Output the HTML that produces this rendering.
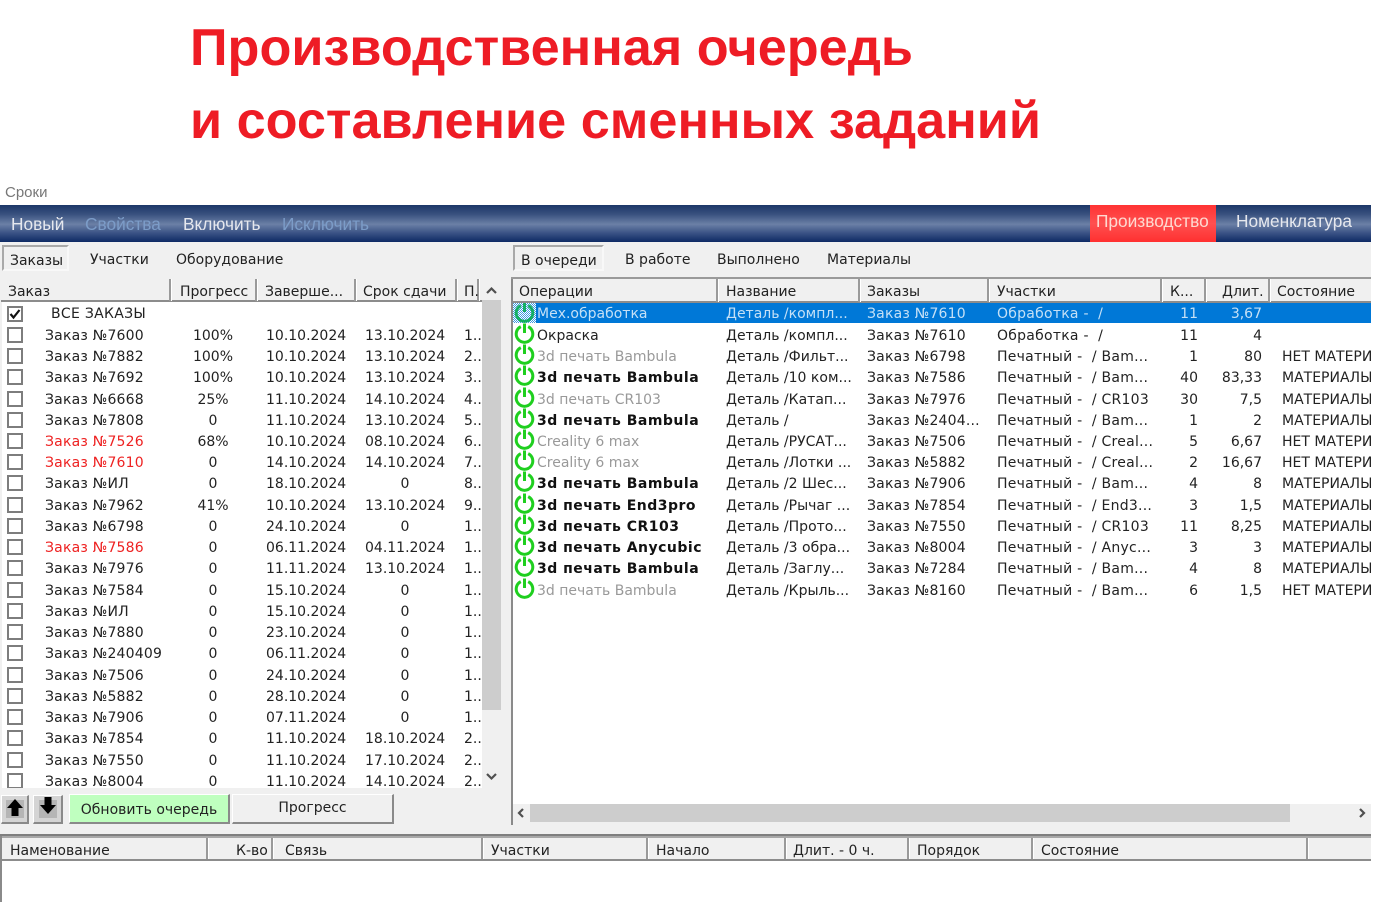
<!DOCTYPE html>
<html lang="ru"><head><meta charset="utf-8"><title>Производственная очередь</title>
<style>
html,body{margin:0;padding:0;background:#fff}
#p{position:relative;width:1373px;height:902px;overflow:hidden;background:#fff;font:14px/21px "DejaVu Sans","Liberation Sans",sans-serif;color:#222}
#p div,#p span,#p svg{position:absolute}
.bg{background:#f0f0f0}
.t{white-space:nowrap}
.nav{font:17.3px/20px "Liberation Sans",sans-serif;white-space:nowrap;top:214px;color:#e6e8ee}
.dis{color:#7c9cc8}
.tab{white-space:nowrap;top:250px;color:#222}
.act{border:2px solid #a9a9a9;border-right-color:#f8f8f8;border-bottom-color:#f8f8f8;background:#f0f0f0;height:26px;box-sizing:border-box}
.hd{background:#f0f0f0;border-bottom:2px solid #8c8c8c;box-sizing:border-box}
.sp{width:2px;background:#9a9a9a;border-right:1px solid #fff}
.h{white-space:nowrap;color:#222;line-height:20px}
.r{height:21px;left:0;width:1373px}
.r span{white-space:nowrap;top:2px}
.r.f span{top:1px}
.cb{left:7px;top:3px;width:12px;height:12px;border:2px solid #7d7d7d;background:#fff}
.a{left:45px;letter-spacing:.2px}.b{left:183px;width:60px;text-align:center}.c{left:266px}.d{left:365px}.d0{left:375px;width:60px;text-align:center}.e{left:464px}
.red{color:#ee2222}
.ic{left:513px;top:-2px;width:23px;height:23px}
.o{left:537px}.n{left:726px}.z{left:867px;letter-spacing:.2px}.u{left:997px;letter-spacing:.25px}.k{left:1138px;width:60px;text-align:right}.l{left:1202px;width:60px;text-align:right}.s{left:1282px}
.gr{color:#999}
.bd{font-weight:bold;color:#111;font-size:14px;letter-spacing:.5px}
.btn{box-sizing:border-box;border:1px solid #fff;border-right:2px solid #8a8a8a;border-bottom:2px solid #8a8a8a;text-align:center;line-height:26px}
</style></head><body><div id="p">
<svg style="left:0;top:0" width="1373" height="160"><text x="190" y="65" font-family="Liberation Sans" font-weight="bold" font-size="52" fill="#ee1c25" textLength="723" lengthAdjust="spacingAndGlyphs">Производственная очередь</text><text x="190" y="138" font-family="Liberation Sans" font-weight="bold" font-size="52" fill="#ee1c25" textLength="851" lengthAdjust="spacingAndGlyphs">и составление сменных заданий</text></svg>
<span class="t" style="left:5px;top:183px;color:#777;font:15px/20px 'Liberation Sans',sans-serif">Сроки</span>

<div class="bg" style="left:0;top:242px;width:1371px;height:660px"></div>
<div style="left:0;top:205px;width:1371px;height:37px;background:linear-gradient(#1c3768 0,#39517f 25%,#6b80a6 52%,#3c5486 75%,#0e2a64 100%)"></div>
<div style="left:1090px;top:205px;width:126px;height:37px;background:linear-gradient(#ff3333,#ff5050 50%,#ff3030)"></div>
<span class="nav" style="left:11px">Новый</span><span class="nav dis" style="left:85px">Свойства</span><span class="nav" style="left:183px">Включить</span><span class="nav dis" style="left:282px">Исключить</span>
<span class="nav" style="left:1096px;top:211px;color:#ffd9d0">Производство</span><span class="nav" style="left:1236px;top:211px">Номенклатура</span>

<div class="act" style="left:2px;top:245px;width:67px"></div>
<span class="tab" style="left:10px;top:251px">Заказы</span><span class="tab" style="left:90px">Участки</span><span class="tab" style="left:176px">Оборудование</span>
<div class="act" style="left:513px;top:245px;width:91px"></div>
<span class="tab" style="left:521px;top:251px">В очереди</span><span class="tab" style="left:625px">В работе</span><span class="tab" style="left:717px">Выполнено</span><span class="tab" style="left:827px">Материалы</span>

<!-- left list -->
<div class="hd" style="left:1px;top:279px;width:481px;height:23px"></div>
<div class="sp" style="left:169px;top:279px;height:22px"></div><div class="sp" style="left:255px;top:279px;height:22px"></div><div class="sp" style="left:354px;top:279px;height:22px"></div><div class="sp" style="left:455px;top:279px;height:22px"></div><div class="sp" style="left:477px;top:279px;height:22px"></div>
<span class="h" style="left:8px;top:282px">Заказ</span><span class="h" style="left:180px;top:282px">Прогресс</span><span class="h" style="left:265px;top:282px">Заверше...</span><span class="h" style="left:363px;top:282px">Срок сдачи</span><span class="h" style="left:464px;top:282px">П.</span>
<div style="left:2px;top:302px;width:480px;height:486px;background:#fff;overflow:hidden">
<div style="left:-2px;top:-302px;width:1373px;height:902px">
<div class="r f" style="top:303px"><div class="cb"></div><svg style="left:8px;top:4px" width="14" height="14"><path d="M2.5 7L5.5 10.5L11.5 3" fill="none" stroke="#111" stroke-width="2.2"/></svg><span class="t" style="left:51px;letter-spacing:.3px">ВСЕ ЗАКАЗЫ</span></div>
<div class="r" style="top:324px"><div class="cb"></div><span class="a">Заказ №7600</span><span class="b">100%</span><span class="c">10.10.2024</span><span class="d">13.10.2024</span><span class="e">1..</span></div>
<div class="r" style="top:345px"><div class="cb"></div><span class="a">Заказ №7882</span><span class="b">100%</span><span class="c">10.10.2024</span><span class="d">13.10.2024</span><span class="e">2..</span></div>
<div class="r" style="top:366px"><div class="cb"></div><span class="a">Заказ №7692</span><span class="b">100%</span><span class="c">10.10.2024</span><span class="d">13.10.2024</span><span class="e">3..</span></div>
<div class="r" style="top:388px"><div class="cb"></div><span class="a">Заказ №6668</span><span class="b">25%</span><span class="c">11.10.2024</span><span class="d">14.10.2024</span><span class="e">4..</span></div>
<div class="r" style="top:409px"><div class="cb"></div><span class="a">Заказ №7808</span><span class="b">0</span><span class="c">11.10.2024</span><span class="d">13.10.2024</span><span class="e">5..</span></div>
<div class="r" style="top:430px"><div class="cb"></div><span class="a red">Заказ №7526</span><span class="b">68%</span><span class="c">10.10.2024</span><span class="d">08.10.2024</span><span class="e">6..</span></div>
<div class="r" style="top:451px"><div class="cb"></div><span class="a red">Заказ №7610</span><span class="b">0</span><span class="c">14.10.2024</span><span class="d">14.10.2024</span><span class="e">7..</span></div>
<div class="r" style="top:472px"><div class="cb"></div><span class="a">Заказ №ИЛ</span><span class="b">0</span><span class="c">18.10.2024</span><span class="d0">0</span><span class="e">8..</span></div>
<div class="r" style="top:494px"><div class="cb"></div><span class="a">Заказ №7962</span><span class="b">41%</span><span class="c">10.10.2024</span><span class="d">13.10.2024</span><span class="e">9..</span></div>
<div class="r" style="top:515px"><div class="cb"></div><span class="a">Заказ №6798</span><span class="b">0</span><span class="c">24.10.2024</span><span class="d0">0</span><span class="e">1..</span></div>
<div class="r" style="top:536px"><div class="cb"></div><span class="a red">Заказ №7586</span><span class="b">0</span><span class="c">06.11.2024</span><span class="d">04.11.2024</span><span class="e">1..</span></div>
<div class="r" style="top:557px"><div class="cb"></div><span class="a">Заказ №7976</span><span class="b">0</span><span class="c">11.11.2024</span><span class="d">13.10.2024</span><span class="e">1..</span></div>
<div class="r" style="top:579px"><div class="cb"></div><span class="a">Заказ №7584</span><span class="b">0</span><span class="c">15.10.2024</span><span class="d0">0</span><span class="e">1..</span></div>
<div class="r" style="top:600px"><div class="cb"></div><span class="a">Заказ №ИЛ</span><span class="b">0</span><span class="c">15.10.2024</span><span class="d0">0</span><span class="e">1..</span></div>
<div class="r" style="top:621px"><div class="cb"></div><span class="a">Заказ №7880</span><span class="b">0</span><span class="c">23.10.2024</span><span class="d0">0</span><span class="e">1..</span></div>
<div class="r" style="top:642px"><div class="cb"></div><span class="a">Заказ №240409</span><span class="b">0</span><span class="c">06.11.2024</span><span class="d0">0</span><span class="e">1..</span></div>
<div class="r" style="top:664px"><div class="cb"></div><span class="a">Заказ №7506</span><span class="b">0</span><span class="c">24.10.2024</span><span class="d0">0</span><span class="e">1..</span></div>
<div class="r" style="top:685px"><div class="cb"></div><span class="a">Заказ №5882</span><span class="b">0</span><span class="c">28.10.2024</span><span class="d0">0</span><span class="e">1..</span></div>
<div class="r" style="top:706px"><div class="cb"></div><span class="a">Заказ №7906</span><span class="b">0</span><span class="c">07.11.2024</span><span class="d0">0</span><span class="e">1..</span></div>
<div class="r" style="top:727px"><div class="cb"></div><span class="a">Заказ №7854</span><span class="b">0</span><span class="c">11.10.2024</span><span class="d">18.10.2024</span><span class="e">2..</span></div>
<div class="r" style="top:749px"><div class="cb"></div><span class="a">Заказ №7550</span><span class="b">0</span><span class="c">11.10.2024</span><span class="d">17.10.2024</span><span class="e">2..</span></div>
<div class="r" style="top:770px"><div class="cb"></div><span class="a">Заказ №8004</span><span class="b">0</span><span class="c">11.10.2024</span><span class="d">14.10.2024</span><span class="e">2..</span></div>
</div></div>
<div class="bg" style="left:482px;top:279px;width:19px;height:509px"></div>
<div style="left:482px;top:300px;width:19px;height:410px;background:#cdcdcd"></div>
<svg style="left:482px;top:283px" width="19" height="14"><path d="M5 10L9.5 5.5L14 10" fill="none" stroke="#505050" stroke-width="2.2"/></svg>
<svg style="left:482px;top:770px" width="19" height="14"><path d="M5 4L9.5 8.5L14 4" fill="none" stroke="#505050" stroke-width="2.2"/></svg>

<!-- buttons -->
<div class="btn" style="left:1px;top:795px;width:28px;height:29px;background:#d4d4d4"></div>
<div style="left:6px;top:800px;width:18px;height:18px;background:#b5b5b5"></div>
<svg style="left:5px;top:798px" width="20" height="20"><path d="M10 1L18 10H13.5V18H6.5V10H2Z" fill="#000"/></svg>
<div class="btn" style="left:33px;top:795px;width:30px;height:29px;background:#d4d4d4"></div>
<div style="left:39px;top:800px;width:18px;height:18px;background:#b5b5b5"></div>
<svg style="left:38px;top:796px" width="20" height="20"><path d="M6.5 1H13.5V9H18L10 18L2 9H6.5Z" fill="#000"/></svg>
<div class="btn t" style="left:69px;top:794px;width:161px;height:30px;background:#bfffbf;line-height:30px">Обновить очередь</div>
<div class="btn t" style="left:232px;top:794px;width:162px;height:30px;background:#f0f0f0;line-height:27px">Прогресс</div>

<!-- right list -->
<div style="left:511px;top:277px;width:2px;height:548px;background:#8a8a8a"></div>
<div style="left:511px;top:277px;width:860px;height:2px;background:#9a9a9a"></div>
<div class="hd" style="left:513px;top:279px;width:858px;height:24px"></div>
<div class="sp" style="left:716px;top:279px;height:23px"></div><div class="sp" style="left:858px;top:279px;height:23px"></div><div class="sp" style="left:987px;top:279px;height:23px"></div><div class="sp" style="left:1160px;top:279px;height:23px"></div><div class="sp" style="left:1204px;top:279px;height:23px"></div><div class="sp" style="left:1268px;top:279px;height:23px"></div>
<span class="h" style="left:519px;top:282px">Операции</span><span class="h" style="left:726px;top:282px">Название</span><span class="h" style="left:867px;top:282px">Заказы</span><span class="h" style="left:997px;top:282px">Участки</span><span class="h" style="left:1170px;top:282px">К...</span><span class="h" style="left:1222px;top:282px">Длит.</span><span class="h" style="left:1277px;top:282px">Состояние</span>
<div style="left:513px;top:303px;width:858px;height:501px;background:#fff"></div>
<div style="left:513px;top:303px;width:858px;height:20px;background:#0078d7"></div>
<svg width="0" height="0"><defs><symbol id="pw" viewBox="0 0 23 23"><path d="M7.8 4.6A8.3 8.3 0 1 0 15.2 4.6" fill="none" stroke="#1fcf1f" stroke-width="3"/><path d="M11.5 1.5V11" fill="none" stroke="#1fcf1f" stroke-width="3"/></symbol><pattern id="dt" width="2" height="2" patternUnits="userSpaceOnUse"><rect width="1" height="1" fill="#0078d7"/><rect x="1" y="1" width="1" height="1" fill="#0078d7"/></pattern></defs></svg>
<div style="left:0;top:0;width:1371px;height:804px;overflow:hidden">
<div class="r f" style="top:303px;color:#c4e0f6"><svg class="ic" style="top:0;height:20px"><rect width="23" height="20" fill="#fff"/><use href="#pw" y="-2" width="23" height="23"/><rect width="23" height="20" fill="url(#dt)" opacity=".75"/></svg><span class="o">Мех.обработка</span><span class="n">Деталь /компл...</span><span class="z">Заказ №7610</span><span class="u">Обработка -&nbsp; /</span><span class="k">11</span><span class="l">3,67</span></div>
<div class="r" style="top:324px"><svg class="ic"><use href="#pw"/></svg><span class="o">Окраска</span><span class="n">Деталь /компл...</span><span class="z">Заказ №7610</span><span class="u">Обработка -&nbsp; /</span><span class="k">11</span><span class="l">4</span></div>
<div class="r" style="top:345px"><svg class="ic"><use href="#pw"/></svg><span class="o gr">3d печать Bambula</span><span class="n">Деталь /Фильт...</span><span class="z">Заказ №6798</span><span class="u">Печатный -&nbsp; / Bam...</span><span class="k">1</span><span class="l">80</span><span class="s">НЕТ МАТЕРИАЛОВ</span></div>
<div class="r" style="top:366px"><svg class="ic"><use href="#pw"/></svg><span class="o bd">3d печать Bambula</span><span class="n">Деталь /10 ком...</span><span class="z">Заказ №7586</span><span class="u">Печатный -&nbsp; / Bam...</span><span class="k">40</span><span class="l">83,33</span><span class="s">МАТЕРИАЛЫ</span></div>
<div class="r" style="top:388px"><svg class="ic"><use href="#pw"/></svg><span class="o gr">3d печать CR103</span><span class="n">Деталь /Катап...</span><span class="z">Заказ №7976</span><span class="u">Печатный -&nbsp; / CR103</span><span class="k">30</span><span class="l">7,5</span><span class="s">МАТЕРИАЛЫ</span></div>
<div class="r" style="top:409px"><svg class="ic"><use href="#pw"/></svg><span class="o bd">3d печать Bambula</span><span class="n">Деталь /</span><span class="z">Заказ №2404...</span><span class="u">Печатный -&nbsp; / Bam...</span><span class="k">1</span><span class="l">2</span><span class="s">МАТЕРИАЛЫ</span></div>
<div class="r" style="top:430px"><svg class="ic"><use href="#pw"/></svg><span class="o gr">Creality 6 max</span><span class="n">Деталь /РУСАТ...</span><span class="z">Заказ №7506</span><span class="u">Печатный -&nbsp; / Creal...</span><span class="k">5</span><span class="l">6,67</span><span class="s">НЕТ МАТЕРИАЛОВ</span></div>
<div class="r" style="top:451px"><svg class="ic"><use href="#pw"/></svg><span class="o gr">Creality 6 max</span><span class="n">Деталь /Лотки ...</span><span class="z">Заказ №5882</span><span class="u">Печатный -&nbsp; / Creal...</span><span class="k">2</span><span class="l">16,67</span><span class="s">НЕТ МАТЕРИАЛОВ</span></div>
<div class="r" style="top:472px"><svg class="ic"><use href="#pw"/></svg><span class="o bd">3d печать Bambula</span><span class="n">Деталь /2 Шес...</span><span class="z">Заказ №7906</span><span class="u">Печатный -&nbsp; / Bam...</span><span class="k">4</span><span class="l">8</span><span class="s">МАТЕРИАЛЫ</span></div>
<div class="r" style="top:494px"><svg class="ic"><use href="#pw"/></svg><span class="o bd">3d печать End3pro</span><span class="n">Деталь /Рычаг ...</span><span class="z">Заказ №7854</span><span class="u">Печатный -&nbsp; / End3...</span><span class="k">3</span><span class="l">1,5</span><span class="s">МАТЕРИАЛЫ</span></div>
<div class="r" style="top:515px"><svg class="ic"><use href="#pw"/></svg><span class="o bd">3d печать CR103</span><span class="n">Деталь /Прото...</span><span class="z">Заказ №7550</span><span class="u">Печатный -&nbsp; / CR103</span><span class="k">11</span><span class="l">8,25</span><span class="s">МАТЕРИАЛЫ</span></div>
<div class="r" style="top:536px"><svg class="ic"><use href="#pw"/></svg><span class="o bd">3d печать Anycubic</span><span class="n">Деталь /3 обра...</span><span class="z">Заказ №8004</span><span class="u">Печатный -&nbsp; / Anyc...</span><span class="k">3</span><span class="l">3</span><span class="s">МАТЕРИАЛЫ</span></div>
<div class="r" style="top:557px"><svg class="ic"><use href="#pw"/></svg><span class="o bd">3d печать Bambula</span><span class="n">Деталь /Заглу...</span><span class="z">Заказ №7284</span><span class="u">Печатный -&nbsp; / Bam...</span><span class="k">4</span><span class="l">8</span><span class="s">МАТЕРИАЛЫ</span></div>
<div class="r" style="top:579px"><svg class="ic"><use href="#pw"/></svg><span class="o gr">3d печать Bambula</span><span class="n">Деталь /Крыль...</span><span class="z">Заказ №8160</span><span class="u">Печатный -&nbsp; / Bam...</span><span class="k">6</span><span class="l">1,5</span><span class="s">НЕТ МАТЕРИАЛОВ</span></div>
</div>
<div class="bg" style="left:513px;top:804px;width:858px;height:19px"></div>
<div style="left:530px;top:804px;width:760px;height:18px;background:#cdcdcd"></div>
<svg style="left:513px;top:806px" width="18" height="14"><path d="M10 3L6 7L10 11" fill="none" stroke="#505050" stroke-width="2.2"/></svg>
<svg style="left:1353px;top:806px" width="18" height="14"><path d="M7 3L11 7L7 11" fill="none" stroke="#505050" stroke-width="2.2"/></svg>

<!-- bottom -->
<div style="left:0;top:834px;width:1371px;height:2px;background:#7f7f7f"></div>
<div class="hd" style="left:2px;top:838px;width:1369px;height:23px"></div>
<div style="left:0;top:836px;width:1371px;height:2px;background:#a8a8a8"></div>
<div class="sp" style="left:206px;top:838px;height:21px"></div><div class="sp" style="left:271px;top:838px;height:21px"></div><div class="sp" style="left:481px;top:838px;height:21px"></div><div class="sp" style="left:646px;top:838px;height:21px"></div><div class="sp" style="left:784px;top:838px;height:21px"></div><div class="sp" style="left:907px;top:838px;height:21px"></div><div class="sp" style="left:1031px;top:838px;height:21px"></div><div class="sp" style="left:1306px;top:838px;height:21px"></div>
<span class="h" style="left:10px;top:841px">Наменование</span><span class="h" style="left:236px;top:841px">К-во</span><span class="h" style="left:285px;top:841px">Связь</span><span class="h" style="left:491px;top:841px">Участки</span><span class="h" style="left:656px;top:841px">Начало</span><span class="h" style="left:793px;top:841px">Длит. - 0 ч.</span><span class="h" style="left:917px;top:841px">Порядок</span><span class="h" style="left:1041px;top:841px">Состояние</span>
<div style="left:2px;top:861px;width:1369px;height:41px;background:#fff"></div>
<div style="left:0;top:836px;width:2px;height:66px;background:#8a8a8a"></div>
</div></body></html>
